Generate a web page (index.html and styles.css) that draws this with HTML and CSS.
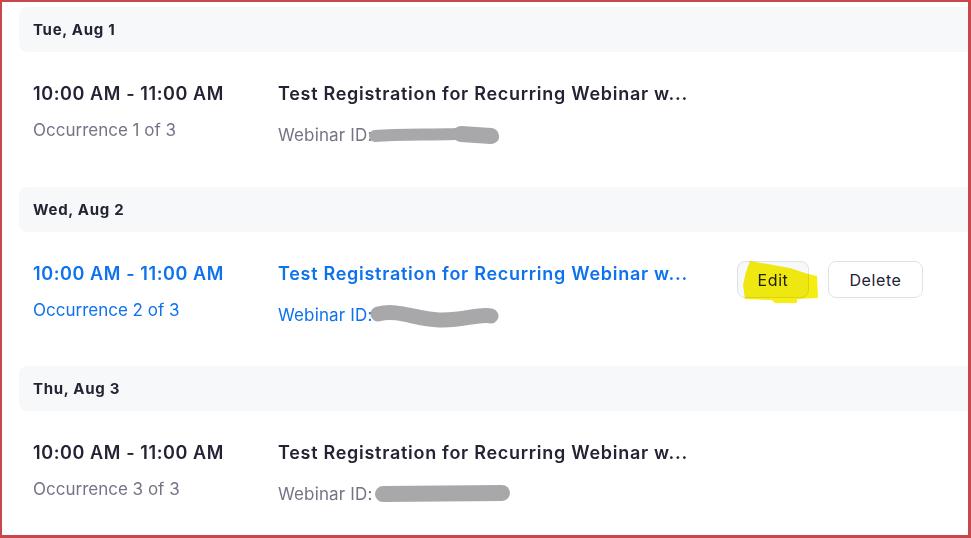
FILE: index.html
```html
<!DOCTYPE html>
<html lang="en">
<head>
<meta charset="utf-8">
<title>Webinar occurrences</title>
<link rel="stylesheet" href="styles.css">
</head>
<body>
<div class="frame">
  <section class="day">
    <div class="day-head">Tue, Aug 1</div>
    <div class="occ">
      <div class="when">
        <div class="time">10:00 AM - 11:00 AM</div>
        <div class="count">Occurrence 1 of 3</div>
      </div>
      <div class="info">
        <div class="title">Test Registration for Recurring Webinar w...</div>
        <div class="wid">Webinar ID:<svg class="blot b1" width="132" height="22" viewBox="0 0 132 22"><path d="M6 12 C30 10 60 11 85 10 C100 9 112 12 124 13" fill="none" stroke="#a8a8ab" stroke-width="12" stroke-linecap="round"/><path d="M92 10 L122 12" stroke="#a8a8ab" stroke-width="16" stroke-linecap="round"/></svg></div>
      </div>
    </div>
  </section>
  <section class="day">
    <div class="day-head">Wed, Aug 2</div>
    <div class="occ active">
      <div class="when">
        <div class="time">10:00 AM - 11:00 AM</div>
        <div class="count">Occurrence 2 of 3</div>
      </div>
      <div class="info">
        <div class="title">Test Registration for Recurring Webinar w...</div>
        <div class="wid">Webinar ID:<svg class="blot b2" width="132" height="32" viewBox="0 0 132 32"><path d="M9 13 C30 8 45 18 70 19 C95 20 110 12 122 15" fill="none" stroke="#a8a8ab" stroke-width="15" stroke-linecap="round"/></svg></div>
      </div>
      <div class="actions">
        <button class="btn edit" type="button">Edit<svg class="mark" width="90" height="46" viewBox="0 0 90 46"><polygon points="13,0 53,7 71,13 80,15 81,37 60,38 60,42 38,42 35,39 8,38 6,24 9,11" fill="#f6ee12"/></svg></button>
        <button class="btn del" type="button">Delete</button>
      </div>
    </div>
  </section>
  <section class="day">
    <div class="day-head">Thu, Aug 3</div>
    <div class="occ">
      <div class="when">
        <div class="time">10:00 AM - 11:00 AM</div>
        <div class="count">Occurrence 3 of 3</div>
      </div>
      <div class="info">
        <div class="title">Test Registration for Recurring Webinar w...</div>
        <div class="wid">Webinar ID: <svg class="blot b3" width="138" height="20" viewBox="0 0 138 20"><path d="M11 10 L130 9" fill="none" stroke="#a8a8ab" stroke-width="16" stroke-linecap="round"/></svg></div>
      </div>
    </div>
  </section>
</div>
</body>
</html>
```
FILE: styles.css
```css
* { box-sizing: border-box; }
html, body { margin: 0; padding: 0; background: #fff; }
body {
  font-family: Inter, "Liberation Sans", Arial, sans-serif;
  color: #232333;
}
.frame {
  width: 971px;
  height: 538px;
  overflow: hidden;
  border-style: solid;
  border-color: #c8474a;
  border-width: 2px 3px 3px 2px;
  padding: 5px 0 0 17px;
}
.day-head {
  height: 45px;
  background: #f7f8fa;
  border-radius: 8px 0 0 8px;
  padding-left: 14px;
  display: flex;
  align-items: center;
  font-size: 15px;
  letter-spacing: 0.7px;
  font-weight: 700;
  color: #232333;
}
.occ {
  height: 135px;
  display: flex;
  padding: 30px 0 0 14px;
}
.occ.active { height: 134px; }
.day:last-child .occ { height: 133px; }
.when { width: 245px; }
.time {
  font-size: 18px;
  line-height: 24px;
  letter-spacing: 0.6px;
  font-weight: 600;
}
.count {
  margin-top: 13px;
  font-size: 17px;
  line-height: 22px;
  color: #747487;
}
.info { width: 459px; }
.title {
  font-size: 18px;
  line-height: 24px;
  letter-spacing: 0.72px;
  font-weight: 600;
}
.wid {
  margin-top: 18px;
  font-size: 17px;
  line-height: 22px;
  letter-spacing: 0.15px;
  color: #747487;
  display: flex;
  align-items: center;
  height: 22px;
}
.blot { flex: none; }
.b1 { margin-left: -3px; }
.b2 { margin-left: -3px; margin-top: 4px; }
.b3 { margin-left: 0; }
.active .time, .active .count, .active .title, .active .wid { color: #0e72ed; }
.actions {
  display: flex;
  gap: 19px;
  margin-top: -1px;
  align-items: flex-start;
}
.btn {
  position: relative;
  height: 37px;
  padding: 0;
  border: 1px solid #dfe3e8;
  border-radius: 8px;
  background: #fff;
  font-family: inherit;
  font-size: 16px;
  letter-spacing: 0.6px;
  color: #232333;
  cursor: pointer;
}
.edit { width: 72px; background: #f7f8fa; }
.del { width: 95px; }
.mark {
  position: absolute;
  left: -1px;
  top: -1px;
  mix-blend-mode: multiply;
  pointer-events: none;
}
```
